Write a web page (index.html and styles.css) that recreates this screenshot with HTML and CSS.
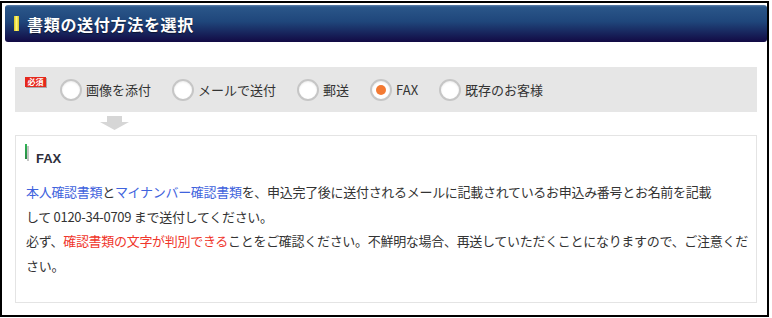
FILE: index.html
```html
<!DOCTYPE html>
<html lang="ja">
<head>
    <meta charset="UTF-8">
    <meta name="viewport" content="width=device-width, initial-scale=1.0">
    <title>書類の送付方法を選択</title>
    <link rel="stylesheet" href="styles.css">
</head>
<body>
    <div class="frame">
        <h2 class="title"><span class="title-mark"></span>書類の送付方法を選択</h2>

        <div class="choices">
            <span class="required">必須</span>
            <label class="choice"><input type="radio" name="send">画像を添付</label>
            <label class="choice"><input type="radio" name="send">メールで送付</label>
            <label class="choice"><input type="radio" name="send">郵送</label>
            <label class="choice"><input type="radio" name="send" checked>FAX</label>
            <label class="choice"><input type="radio" name="send">既存のお客様</label>
        </div>

        <div class="arrow">
            <svg width="29" height="14" viewBox="0 0 29 14"><polygon points="7,0 22,0 22,6 29,6 14.5,14 0,6 7,6" fill="#d6d6d6"/></svg>
        </div>

        <div class="note">
            <h3 class="note-title"><span class="note-mark"></span><span class="note-text">FAX</span></h3>
            <p>
                <span class="blue">本人確認書類</span>と<span class="blue">マイナンバー確認書類</span>を、申込完了後に送付されるメールに記載されているお申込み番号とお名前を記載<br>
                して 0120-34-0709 まで送付してください。<br>
                必ず、<span class="red">確認書類の文字が判別できる</span>ことをご確認ください。不鮮明な場合、再送していただくことになりますので、ご注意くだ<br>
                さい。
            </p>
        </div>
    </div>
</body>
</html>
```

FILE: styles.css
```css
body {
    font-family: "Noto Sans CJK JP", "Liberation Sans", sans-serif;
    color: #333;
    background: #fff;
    margin: 0;
}
.frame {
    width: 765px;
    margin-top: 1px;
    padding: 0 0 12px;
    border: 2px solid #000;
}
.title {
    display: flex;
    align-items: center;
    gap: 8px;
    height: 37px;
    margin: 2px 0 0 3px;
    padding-left: 9px;
    box-sizing: border-box;
    font-size: 16px;
    letter-spacing: 0.7px;
    font-weight: bold;
    color: #fff;
    text-shadow: 0 1px 1px rgba(0, 0, 0, 0.5);
    background: linear-gradient(#5c80aa 0, #2a5689 2px, #1f467b 45%, #120a44 100%);
    border-radius: 3px;
}
.title-mark {
    width: 5px;
    height: 15px;
    background: linear-gradient(to right, #d9c81e, #fff47a, #d9c81e);
}
.choices {
    display: flex;
    align-items: center;
    height: 45px;
    margin: 25px 10px 0 13px;
    padding-left: 10px;
    background: #e6e6e6;
    font-size: 13px;
}
.required {
    align-self: flex-start;
    margin: 10px 14px 0 0;
    width: 21px;
    height: 10px;
    line-height: 10px;
    font-size: 8px;
    font-weight: bold;
    text-align: center;
    color: #fff;
    background: #e5281c;
    box-shadow: 1px 1px 0 #aaa;
    overflow: hidden;
}
.choice {
    display: flex;
    align-items: center;
    gap: 4px;
    margin-right: 21px;
    cursor: pointer;
}
.choice input {
    appearance: none;
    -webkit-appearance: none;
    width: 22px;
    height: 22px;
    margin: 0;
    border: 2px solid #c6c6c6;
    border-radius: 50%;
    background: #fff;
    box-shadow: inset 0 1px 2px rgba(0, 0, 0, 0.08);
    display: flex;
    align-items: center;
    justify-content: center;
}
.choice input:checked::after {
    content: "";
    width: 10px;
    height: 10px;
    border-radius: 50%;
    background: #f37a33;
}
.arrow {
    height: 14px;
    margin: 4px 0 5px 98px;
    line-height: 0;
}
.note {
    margin: 0 10px 0 13px;
    padding: 8px 0 23px 10px;
    border: 1px solid #e4e4e4;
}
.note-title {
    display: flex;
    align-items: flex-start;
    gap: 9px;
    margin: 0 0 0 -1px;
    font-family: "Liberation Sans", Arial, sans-serif;
    font-size: 13px;
    line-height: 17px;
    font-weight: bold;
    color: #2e2e3a;
}
.note-mark {
    width: 2px;
    height: 15px;
    background: linear-gradient(#2fb455, #2a8a45);
    box-shadow: 2px 2px 0 #c6c6c6;
}
.note-text {
    margin-top: 6px;
}
.note p {
    margin: 13px 0 0;
    font-size: 13px;
    line-height: 24.7px;
    letter-spacing: -0.3px;
    white-space: nowrap;
}
.blue {
    color: #3f63dd;
}
.red {
    color: #f0362b;
}
```
